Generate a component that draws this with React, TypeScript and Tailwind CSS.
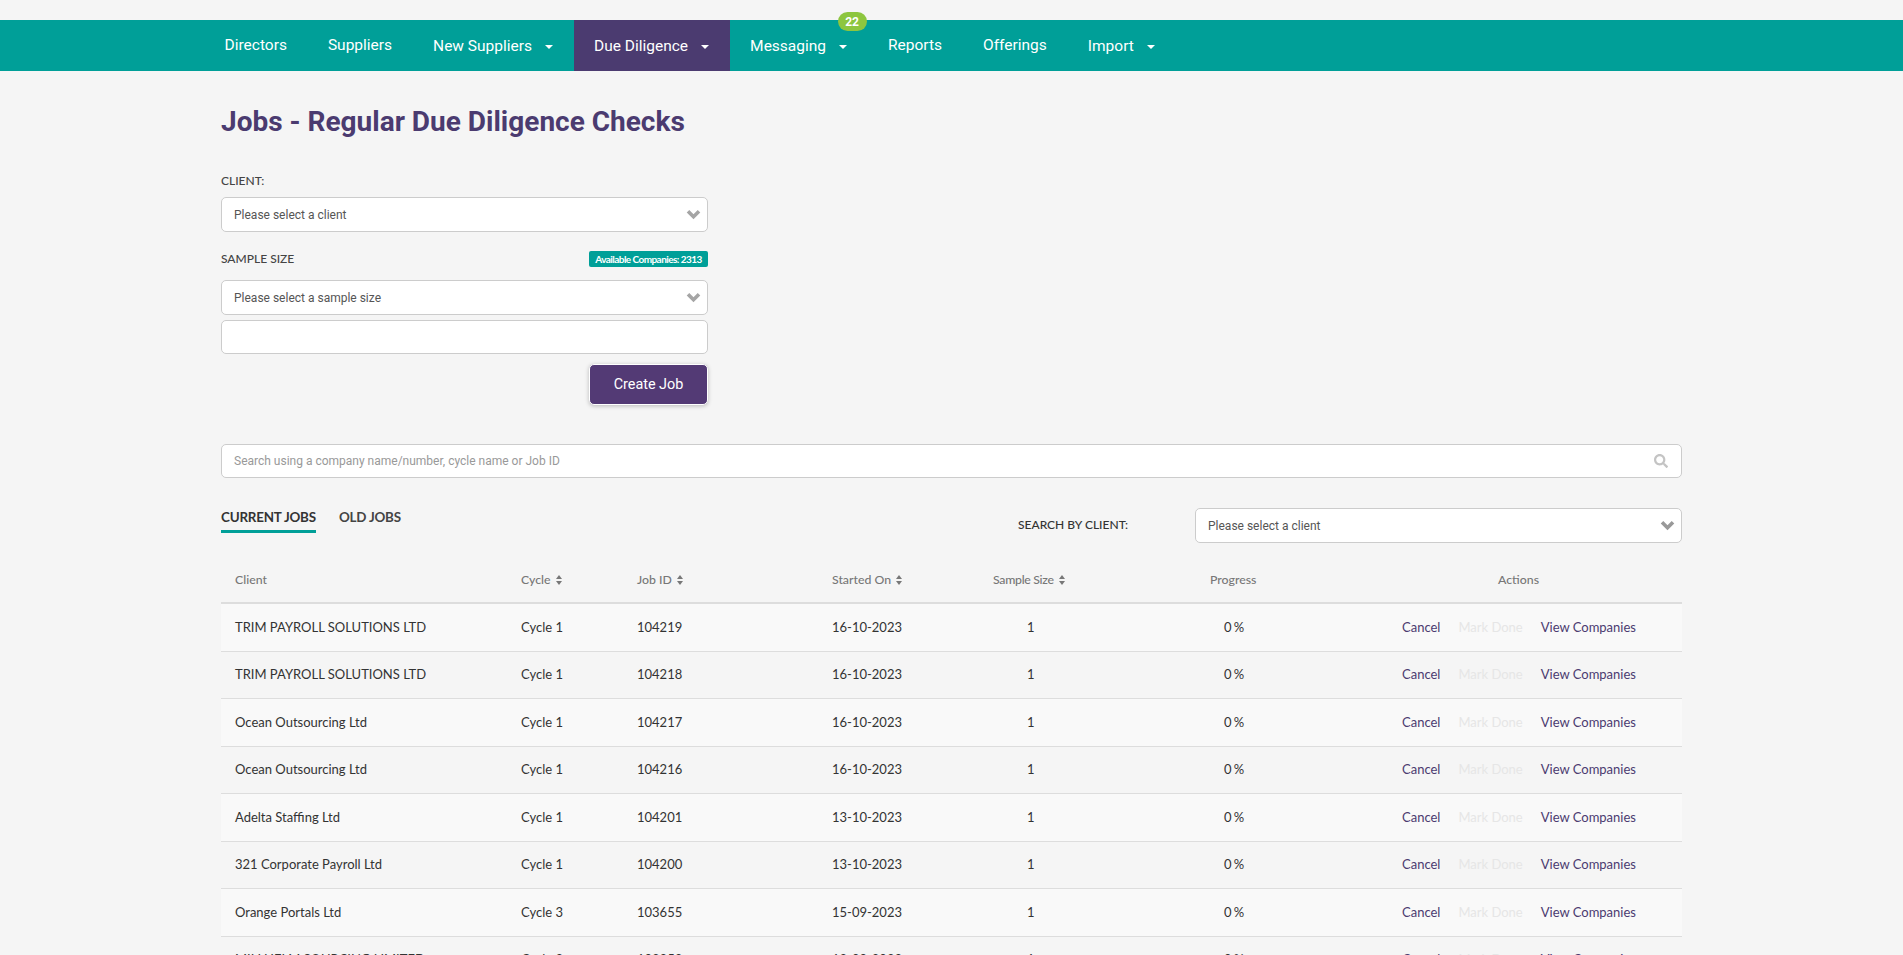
import React from "react";
import { FaSearch } from "react-icons/fa";

const rows = [
  ["TRIM PAYROLL SOLUTIONS LTD", "Cycle 1", "104219", "16-10-2023"],
  ["TRIM PAYROLL SOLUTIONS LTD", "Cycle 1", "104218", "16-10-2023"],
  ["Ocean Outsourcing Ltd", "Cycle 1", "104217", "16-10-2023"],
  ["Ocean Outsourcing Ltd", "Cycle 1", "104216", "16-10-2023"],
  ["Adelta Staffing Ltd", "Cycle 1", "104201", "13-10-2023"],
  ["321 Corporate Payroll Ltd", "Cycle 1", "104200", "13-10-2023"],
  ["Orange Portals Ltd", "Cycle 3", "103655", "15-09-2023"],
  ["MILLHELM SOURCING LIMITED", "Cycle 3", "103353", "12-09-2023"],
];

function Caret() {
  return <span className="ml-[13px] inline-block h-0 w-0 border-x-[4px] border-t-[4px] border-x-transparent border-t-white" />;
}

function NavItem({ label, caret, active, badge }: { label: string; caret?: boolean; active?: boolean; badge?: string }) {
  return (
    <div className={`relative flex h-full items-center px-[20.5px] text-[15.5px] font-normal text-white ${caret ? "pt-[2px]" : ""} ${active ? "bg-[#4b3b70]" : ""}`}>
      <span>{label}</span>
      {caret && <Caret />}
      {badge && (
        <span className="absolute right-[1px] top-[-8px] flex h-[19px] w-[29px] items-center justify-center rounded-full bg-[#8dc63f] text-[12px] font-bold text-white">
          {badge}
        </span>
      )}
    </div>
  );
}

function SelectBox({ text, className, dark }: { text: string; className?: string; dark?: boolean }) {
  return (
    <div className={`flex h-[35px] items-center justify-between rounded-[5px] border border-[#cccccc] bg-white pl-[12px] pr-[6px] text-[12px] text-[#555555] ${className ?? ""}`}>
      <span>{text}</span>
      <svg width="15" height="11" viewBox="0 0 15 11">
        <path d="M2 2.2 L7.5 7.7 L13 2.2" fill="none" stroke={dark ? "#999999" : "#a5a5a5"} strokeWidth="3.6" />
      </svg>
    </div>
  );
}

function Sort() {
  return (
    <svg width="6" height="10" viewBox="0 0 6 10" className="ml-[5px] text-[#777777]">
      <path d="M3 0 L6 4 H0 Z M3 10 L6 6 H0 Z" fill="currentColor" />
    </svg>
  );
}

function Head({ label, sort, className }: { label: string; sort?: boolean; className: string }) {
  return (
    <div className={`flex items-center ${className}`}>
      <span>{label}</span>
      {sort && <Sort />}
    </div>
  );
}

export default function App() {
  return (
    <div className="h-[955px] overflow-hidden bg-[#f5f5f5] pt-[20px] font-['Lato',sans-serif]">
      <nav className="flex h-[51px] items-center bg-[#009f98] pl-[204px] font-['Roboto',sans-serif]">
        <NavItem label="Directors" />
        <NavItem label="Suppliers" />
        <NavItem label="New Suppliers" caret />
        <NavItem label="Due Diligence" caret active />
        <NavItem label="Messaging" caret badge="22" />
        <NavItem label="Reports" />
        <NavItem label="Offerings" />
        <NavItem label="Import" caret />
      </nav>

      <main className="mx-[221px] w-[1461px]">
        <h1 className="mt-[33px] font-['Roboto',sans-serif] text-[28px] font-bold leading-[36px] text-[#4b3b70]">
          Jobs - Regular Due Diligence Checks
        </h1>

        <section className="mt-[33px] w-[487px]">
          <div className="text-[12px] font-medium leading-[16px] text-[#444444]">CLIENT:</div>
          <SelectBox text="Please select a client" className="mt-[8px] font-['Roboto',sans-serif]" />
          <div className="mt-[19px] flex h-[16px] items-center justify-between">
            <span className="text-[12px] font-medium text-[#444444]">SAMPLE SIZE</span>
            <span className="flex h-[16px] w-[119px] items-center justify-center rounded-[2px] bg-[#009f98] text-[10px] font-bold tracking-[-0.55px] text-white">
              Available Companies: 2313
            </span>
          </div>
          <SelectBox text="Please select a sample size" className="mt-[13px] font-['Roboto',sans-serif]" />
          <div className="mt-[5px] h-[34px] rounded-[5px] border border-[#cccccc] bg-white" />
          <div className="mt-[10px] flex justify-end">
            <button className="h-[41px] w-[119px] rounded-[5px] border border-white bg-[#533a75] font-['Roboto',sans-serif] text-[14.4px] font-normal text-white shadow-[0_1px_4px_rgba(0,0,0,0.25)]">
              Create Job
            </button>
          </div>
        </section>

        <div className="mt-[38.5px] flex h-[34px] items-center justify-between rounded-[5px] border border-[#cccccc] bg-white pl-[12px] pr-[13px]">
          <span className="font-['Roboto',sans-serif] text-[12px] text-[#999999]">Search using a company name/number, cycle name or Job ID</span>
          <FaSearch size={14} color="#c4c4c4" />
        </div>

        <div className="mt-[30.5px] flex h-[35px] items-start">
          <div className="flex w-[796px] items-start">
            <div className="h-[25px] border-b-[3px] border-[#009f98] text-[13.4px] font-bold leading-[18px] tracking-[-0.2px] text-[#333333]">CURRENT JOBS</div>
            <div className="ml-[23px] text-[13.4px] font-bold leading-[18px] tracking-[-0.2px] text-[#444444]">OLD JOBS</div>
          </div>
          <div className="w-[178px] pl-[1px] pt-[9px] text-[12px] font-medium leading-[16px] text-[#333333]">SEARCH BY CLIENT:</div>
          <SelectBox text="Please select a client" dark className="flex-1 font-['Roboto',sans-serif]" />
        </div>

        <div className="mt-[15px] flex h-[46px] items-center border-b-[2px] border-[#dddddd] text-[12.3px] font-medium text-[#777777]">
          <Head label="Client" className="w-[286px] pl-[14px]" />
          <Head label="Cycle" sort className="w-[116px] pl-[14px]" />
          <Head label="Job ID" sort className="w-[191px] pl-[14px]" />
          <Head label="Started On" sort className="w-[154px] pl-[18px]" />
          <Head label="Sample Size" sort className="w-[212px] pl-[25px] tracking-[-0.3px]" />
          <Head label="Progress" className="w-[220px] pl-[30px]" />
          <Head label="Actions" className="flex-1 pl-[98px]" />
        </div>

        {rows.map((r, i) => (
          <div
            key={r[2]}
            className={`flex h-[47.5px] items-center border-b border-[#dddddd] text-[13px] text-[#333333] ${i % 2 === 0 ? "bg-[#f9f9f9]" : ""}`}
          >
            <div className="w-[286px] pl-[14px]">{r[0]}</div>
            <div className="w-[116px] pl-[14px]">{r[1]}</div>
            <div className="w-[191px] pl-[14px]">{r[2]}</div>
            <div className="w-[154px] pl-[18px]">{r[3]}</div>
            <div className="w-[212px] pl-[59px]">1</div>
            <div className="w-[220px] pl-[44px] [word-spacing:-1.2px]">0 %</div>
            <div className="flex flex-1 items-center pl-[2px]">
              <span className="text-[#4b3b70]">Cancel</span>
              <span className="ml-[18px] text-[#e6e6e6]">Mark Done</span>
              <span className="ml-[18px] text-[#4b3b70]">View Companies</span>
            </div>
          </div>
        ))}
      </main>
    </div>
  );
}
